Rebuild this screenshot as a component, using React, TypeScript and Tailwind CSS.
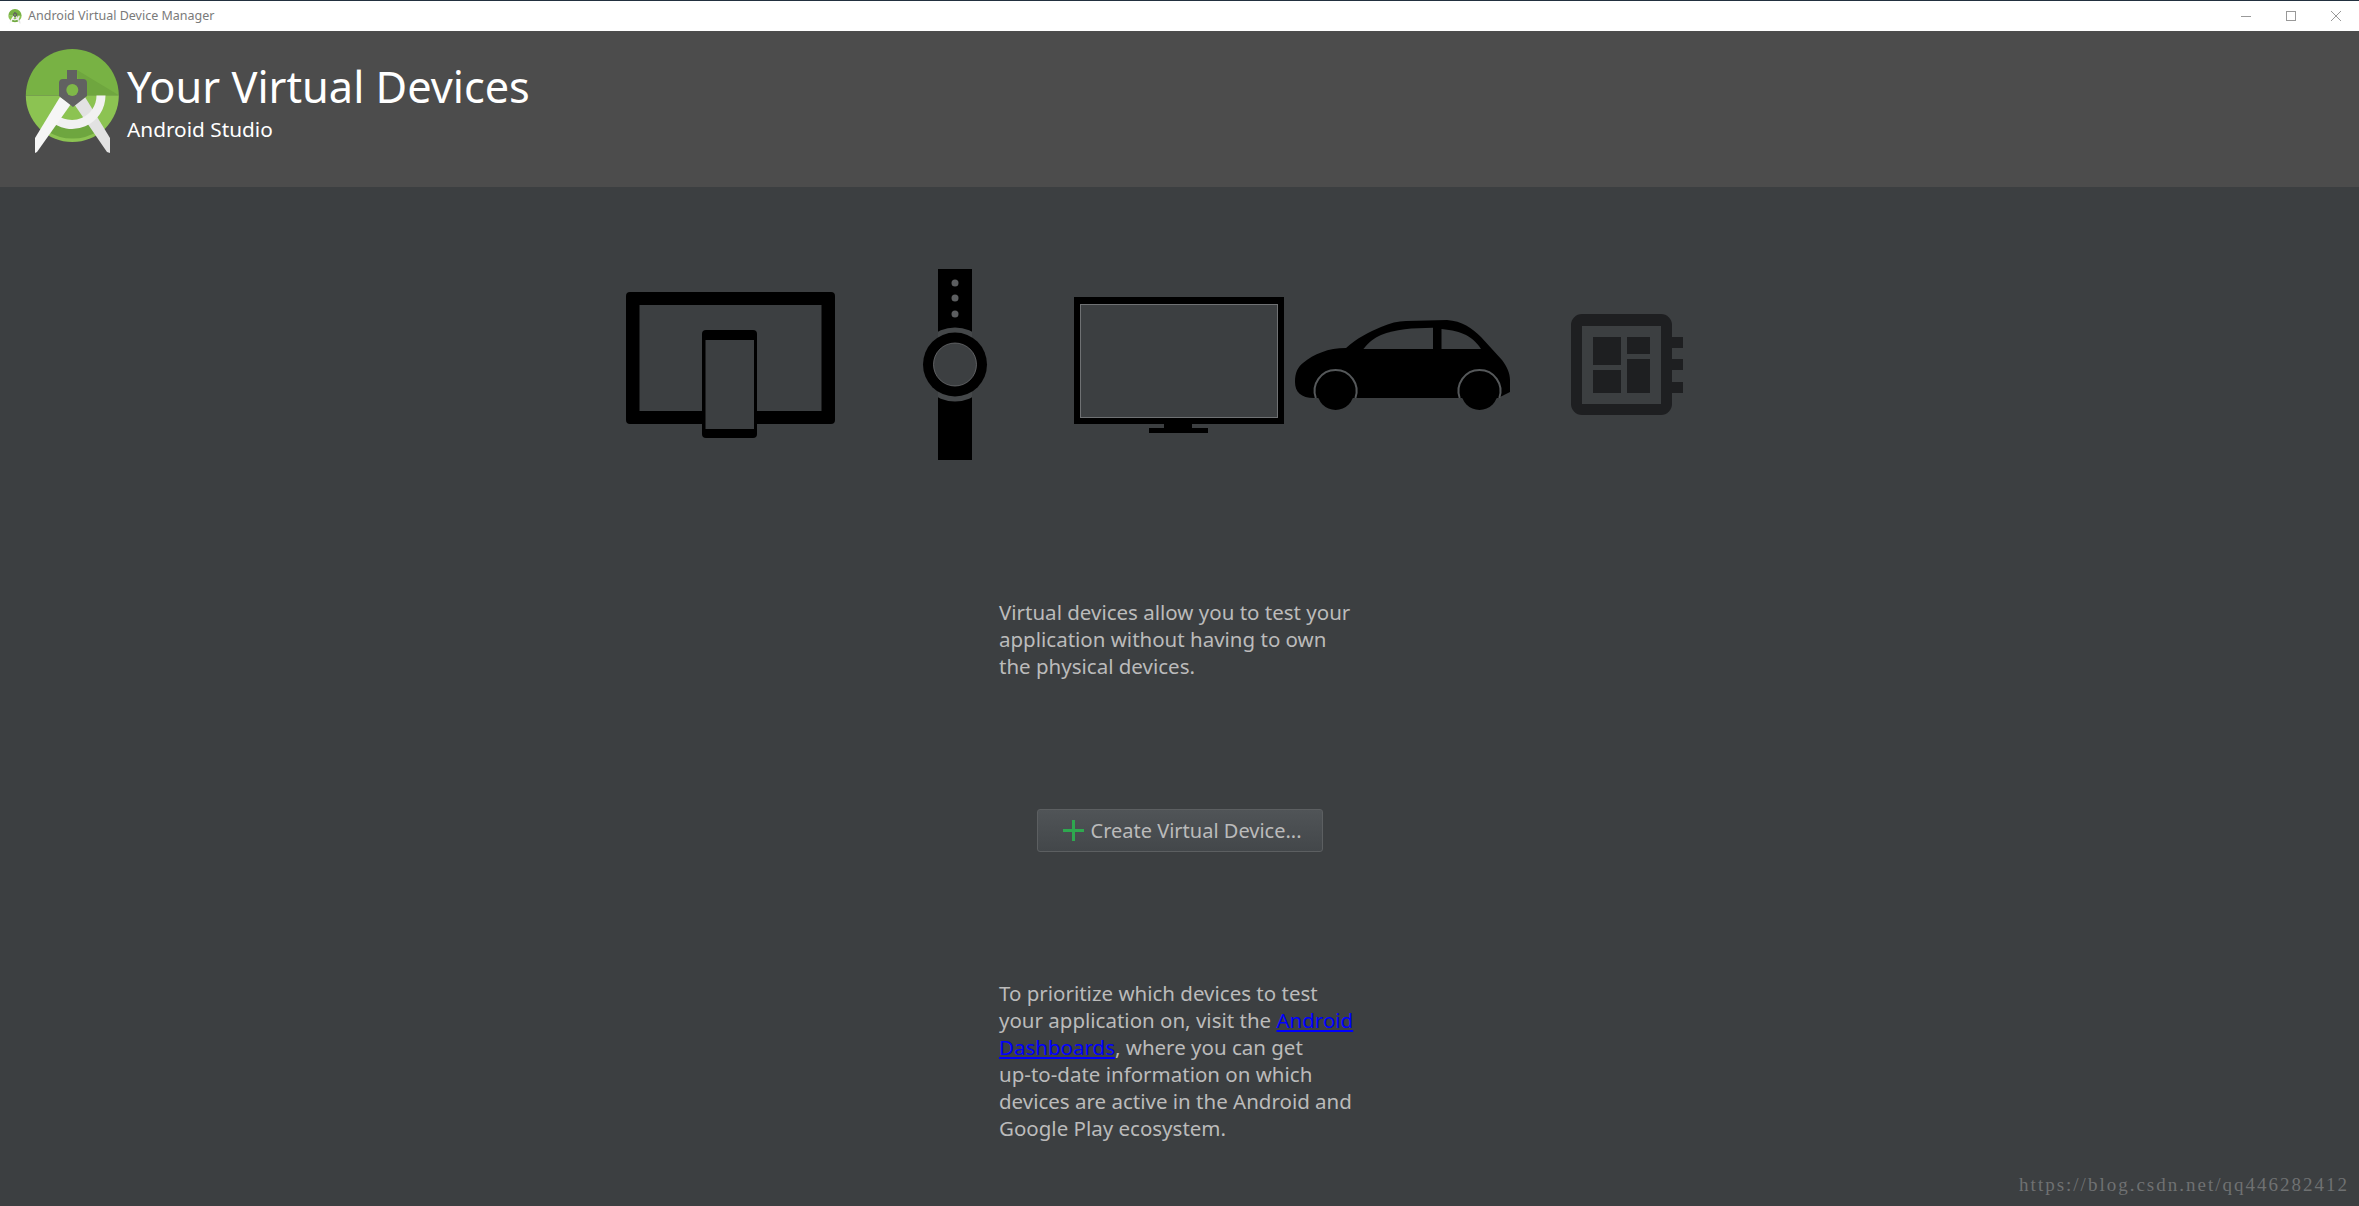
const uiFont = { fontFamily: '"Noto Sans", sans-serif' };

function StudioLogo({ className }: { className: string }) {
  return (
    <svg viewBox="25 49 95 105" className={className}>
      <path d="M25.8 95.5a46.5 46.5 0 0 1 93 0z" fill="#78b244" />
      <path d="M77 70l42.3 25.5h-40z" fill="#6fa63f" />
      <path d="M25.8 95.5a46.5 46.5 0 0 0 93 0z" fill="#8cc352" />
      <path d="M47 131a46.5 46.5 0 0 0 51 0l-6-9h-40z" fill="#6ea63f" />
      <path d="M74 104l11-7 25 41v15l-3-1z" fill="#e2e2e2" />
      <path d="M101 95.5a29 29 0 0 1-49 21" fill="none" stroke="#f1f1f1" strokeWidth="9" />
      <path d="M60 97l11 7-34 48-2 1v-15z" fill="#f6f6f6" />
      <path d="M67 70h10v9h6a4 4 0 0 1 4 4v13l-14 11-14-11V83a4 4 0 0 1 4-4h4z" fill="#616161" />
      <circle cx="72.3" cy="90" r="6" fill="#7fb848" />
    </svg>
  );
}

function TabletPhoneIcon() {
  return (
    <svg viewBox="0 0 210 147" className="mt-[2px] h-[147px] w-[210px]">
      <path fillRule="evenodd" d="M4 0h201a4 4 0 0 1 4 4v124a4 4 0 0 1-4 4H4a4 4 0 0 1-4-4V4a4 4 0 0 1 4-4zM13.5 13v106h182V13z" />
      <path d="M80 38h47a4 4 0 0 1 4 4v100a4 4 0 0 1-4 4H80a4 4 0 0 1-4-4V42a4 4 0 0 1 4-4z" />
      <rect x="79.5" y="48" width="48.5" height="89" fill="#3c3f41" />
    </svg>
  );
}

function WatchIcon() {
  return (
    <svg viewBox="0 0 74 191" className="h-[191px] w-[74px]">
      <defs>
        <clipPath id="strap">
          <rect x="20" y="0" width="34" height="191" />
        </clipPath>
      </defs>
      <rect x="20" y="0" width="34" height="191" />
      <circle cx="37" cy="95.5" r="37" fill="#45484a" clipPath="url(#strap)" />
      <circle cx="37" cy="95.5" r="32" />
      <circle cx="37" cy="95.5" r="21.5" fill="#3c3f41" stroke="#77797b" strokeWidth="0.7" />
      <circle cx="37" cy="14" r="3.5" fill="#5c5e60" />
      <circle cx="37" cy="29" r="3.5" fill="#5c5e60" />
      <circle cx="37" cy="45" r="3.5" fill="#5c5e60" />
    </svg>
  );
}

function TvIcon() {
  return (
    <svg viewBox="0 0 210 136" className="mt-[1px] h-[136px] w-[210px]">
      <rect x="0" y="0" width="210" height="127" />
      <rect x="6.5" y="7.5" width="197" height="113" fill="#3c3f41" stroke="#6f7173" strokeWidth="1" />
      <rect x="90" y="127" width="28" height="5" />
      <rect x="75" y="131" width="59" height="5" />
    </svg>
  );
}

function CarIcon() {
  return (
    <svg viewBox="0 0 215 90" className="mt-[1px] h-[90px] w-[215px]">
      <path d="M0 62C0 52 3 47 8 43 19 34 33 28 51 28 62 18 74 12 86 7 95 3 103 1 111 1L152 0C167 1 177 8 186 17L207 40C212 47 215 53 215 60V72L205 77 200 78H19C6 78 0 72 0 62z" />
      <path d="M68.4 29C74 22 79 18 86 15 100 9 118 8 138 7.7V29z" fill="#3c3f41" />
      <path d="M146.5 9C157 10 165 12 171 15 178 19 182 23 186 29H146.5z" fill="#3c3f41" />
      <path d="M20.8 78A21 21 0 1 1 60.4 78" fill="#000" stroke="#55585a" strokeWidth="2" />
      <path d="M164.7 78A21 21 0 1 1 204.3 78" fill="#000" stroke="#55585a" strokeWidth="2" />
      <ellipse cx="40.6" cy="71" rx="18.5" ry="19" />
      <ellipse cx="184.5" cy="71" rx="18.5" ry="19" />
    </svg>
  );
}

function ChipIcon() {
  return (
    <svg viewBox="0 0 112 101" className="h-[101px] w-[112px]" fill="#1e1f21">
      <path fillRule="evenodd" d="M11 0h79a11 11 0 0 1 11 11v79a11 11 0 0 1-11 11H11a11 11 0 0 1-11-11V11A11 11 0 0 1 11 0zM11 12v78h79V12z" />
      <rect x="101" y="23" width="11" height="11" />
      <rect x="101" y="45" width="11" height="11" />
      <rect x="101" y="68" width="11" height="11" />
      <rect x="22" y="23" width="28" height="28" />
      <rect x="56" y="23" width="23" height="17" />
      <rect x="22" y="56" width="28" height="23" />
      <rect x="56" y="45" width="23" height="34" />
    </svg>
  );
}

export default function App() {
  return (
    <div className="relative flex h-screen flex-col overflow-hidden bg-[#3c3f41]" style={uiFont}>
      <div className="flex h-[31px] shrink-0 items-center border-t border-[#22303f] bg-white pl-[8px] pr-[18px]">
        <StudioLogo className="h-[15px] w-[14px]" />
        <span className="ml-[6px] text-[12.5px] text-[#7a7a7a]">Android Virtual Device Manager</span>
        <div className="ml-auto flex items-center gap-[35px]">
          <div className="h-px w-[10px] bg-[#999999]" />
          <div className="h-[10px] w-[10px] border border-[#999999]" />
          <svg viewBox="0 0 10 10" className="h-[10px] w-[10px]" stroke="#999999" strokeWidth="1">
            <path d="M0 0l10 10M10 0L0 10" />
          </svg>
        </div>
      </div>

      <header className="flex h-[156px] shrink-0 items-start bg-[#4c4c4c] pl-[25px] pt-[18px]">
        <StudioLogo className="h-[105px] w-[95px]" />
        <div className="ml-[7px] text-white">
          <h1 className="mt-[13px] text-[43.3px] leading-[50px] font-normal">Your Virtual Devices</h1>
          <p className="mt-[3px] text-[20.8px] leading-[28px]">Android Studio</p>
        </div>
      </header>

      <main className="flex flex-1 flex-col">
        <div className="mt-[82px] flex items-center pl-[626px]">
          <TabletPhoneIcon />
          <div className="ml-[82px]"><WatchIcon /></div>
          <div className="ml-[82px]"><TvIcon /></div>
          <div className="ml-[11px]"><CarIcon /></div>
          <div className="ml-[61px]"><ChipIcon /></div>
        </div>

        <div className="flex flex-col items-center text-[20.5px] leading-[27px] text-[#bbbbbb]">
          <p className="mt-[139px] w-[361px] whitespace-nowrap">
            Virtual devices allow you to test your<br />
            application without having to own<br />
            the physical devices.
          </p>
          <button className="mt-[129px] flex h-[43px] w-[286px] items-center rounded-[3px] border border-[#5c5f61] bg-linear-to-b from-[#505457] to-[#43474a] pl-[25px] text-[#bbbbbb]">
            <svg viewBox="0 0 21 21" className="h-[21px] w-[21px]" fill="#2ea84f">
              <path d="M9 0h3v9h9v3h-9v9H9v-9H0V9h9z" />
            </svg>
            <span className="ml-[7px] whitespace-nowrap text-[20px]">Create Virtual Device...</span>
          </button>
          <p className="mt-[128px] w-[361px] whitespace-nowrap">
            To prioritize which devices to test<br />
            your application on, visit the{" "}
            <a href="#" className="text-[#0000ff] underline">Android<br />Dashboards</a>, where you can get<br />
            up-to-date information on which<br />
            devices are active in the Android and<br />
            Google Play ecosystem.
          </p>
        </div>
      </main>

      <span className="absolute bottom-[7px] right-[10px] font-['Liberation_Serif',serif] text-[19px] tracking-[2px] text-[#6f7172]">
        https://blog.csdn.net/qq446282412
      </span>
    </div>
  );
}
